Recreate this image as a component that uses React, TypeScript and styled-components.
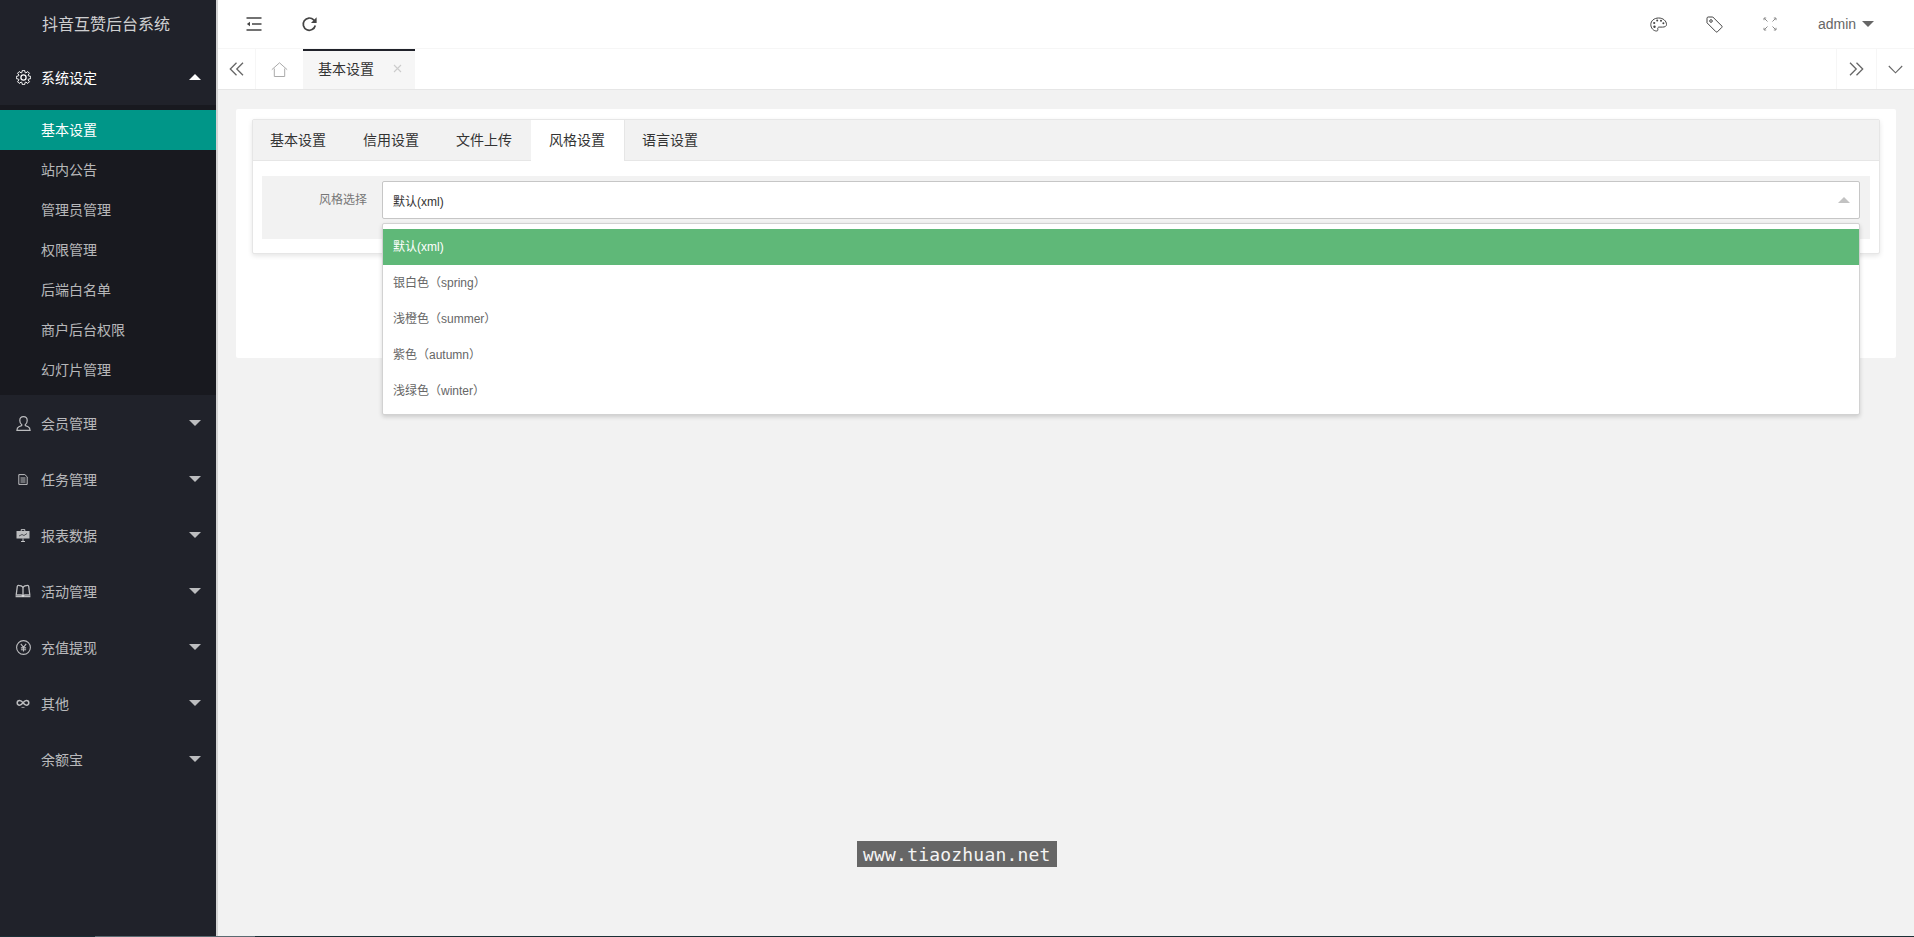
import React from "react";
import styled, { createGlobalStyle } from "styled-components";

const Global = createGlobalStyle`
  html, body { margin: 0; padding: 0; height: 100%; overflow: hidden; background: #f2f2f2; }
  body { font-family: "Liberation Sans", "Noto Sans CJK SC", sans-serif; font-size: 14px; color: #333; }
  * { box-sizing: border-box; }
`;

const Page = styled.div`
  position: relative;
  width: 1914px;
  height: 937px;
  display: flex;
  flex-direction: column;
  overflow: hidden;
`;
const Shell = styled.div`
  flex: 1;
  display: flex;
  min-height: 0;
`;
const BottomLine = styled.div`
  height: 1px;
  background: linear-gradient(90deg, #1b2f36 0 95px, #5b6b72 95px 255px, #1b2f36 255px);
`;

/* Sidebar */
const Sidebar = styled.aside`
  width: 218px;
  flex: none;
  background: #20222a;
  border-right: 2px solid #d4d4d4;
`;
const Logo = styled.div`
  height: 49px;
  padding: 0 0 3px 42px;
  display: flex;
  align-items: center;
  font-size: 16px;
  color: rgba(255, 255, 255, 0.8);
`;
const MenuHead = styled.div<{ $open?: boolean }>`
  height: 56px;
  padding-left: 16px;
  display: flex;
  align-items: center;
  color: ${(p) => (p.$open ? "#fff" : "rgba(255,255,255,.7)")};
`;
const MenuIcon = styled.span`
  width: 14px;
  height: 16px;
  margin-right: 11px;
  display: flex;
  align-items: center;
  justify-content: center;
  flex: none;
`;
const MenuLabel = styled.span`
  flex: 1;
`;
const Caret = styled.span<{ $up?: boolean; $color?: string }>`
  width: 0;
  height: 0;
  border-left: 6px solid transparent;
  border-right: 6px solid transparent;
  ${(p) =>
    p.$up
      ? `border-bottom: 6px solid ${p.$color || "#fff"};`
      : `border-top: 6px solid ${p.$color || "rgba(255,255,255,.7)"};`}
`;
const MenuCaretBox = styled.span`
  width: 27px;
  flex: none;
  display: flex;
`;
const SubMenu = styled.div`
  background: #18191f;
  padding: 5px 0;
`;
const SubItem = styled.div<{ $active?: boolean }>`
  height: 40px;
  line-height: 40px;
  padding-left: 41px;
  color: ${(p) => (p.$active ? "#fff" : "rgba(255,255,255,.7)")};
  background: ${(p) => (p.$active ? "#009688" : "transparent")};
`;

/* Main */
const Main = styled.main`
  flex: 1;
  min-width: 0;
  display: flex;
  flex-direction: column;
`;
const Header = styled.header`
  height: 49px;
  flex: none;
  background: #fff;
  border-bottom: 1px solid #f6f6f6;
  display: flex;
  align-items: center;
  padding: 0 0 0 8px;
`;
const HeadBtn = styled.div`
  width: 56px;
  height: 48px;
  display: flex;
  align-items: center;
  justify-content: center;
  color: #444;
`;
const HeadSpacer = styled.div`
  flex: 1;
`;
const UserBox = styled.div`
  width: 116px;
  height: 48px;
  padding: 0 0 0 20px;
  display: flex;
  align-items: center;
  gap: 6px;
  color: #666;
  font-size: 14px;
`;

const TabBar = styled.div`
  height: 41px;
  flex: none;
  background: #fff;
  border-bottom: 1px solid #e6e6e6;
  display: flex;
`;
const BarBtn = styled.div<{ $w: number; $side: "left" | "right" }>`
  width: ${(p) => p.$w}px;
  flex: none;
  display: flex;
  align-items: center;
  justify-content: center;
  color: #666;
  padding-right: ${(p) => (p.$side === "right" ? "1px" : "0")};
  ${(p) => (p.$side === "right" ? "border-right" : "border-left")}: 1px solid #f6f6f6;
`;
const HomeBtn = styled.div`
  width: 47px;
  flex: none;
  display: flex;
  align-items: center;
  justify-content: center;
  color: #aaa;
`;
const PageTab = styled.div`
  width: 112px;
  flex: none;
  background: #f6f6f6;
  border-top: 2px solid #20222a;
  padding: 0 0 4px 15px;
  display: flex;
  align-items: center;
  color: #333;
`;
const PageTabClose = styled.span`
  margin-left: 19px;
  width: 9px;
  display: flex;
  color: #ccc;
`;
const BarSpacer = styled.div`
  flex: 1;
`;

const Content = styled.div`
  flex: 1;
  padding: 19px 18px 0;
`;
const Card = styled.section`
  background: #fff;
  border-radius: 2px;
  height: 249px;
  padding: 10px 16px 0;
`;
const TabBox = styled.div`
  height: 135px;
  border: 1px solid #e6e6e6;
  border-radius: 2px;
  background: #fff;
  box-shadow: 0 2px 5px 0 rgba(0, 0, 0, 0.1);
`;
const TabTitle = styled.ul`
  list-style: none;
  margin: 0;
  padding: 0;
  height: 41px;
  display: flex;
  background: #f2f2f2;
  border-bottom: 1px solid #e6e6e6;
`;
const TabItem = styled.li<{ $active?: boolean }>`
  width: 93px;
  height: ${(p) => (p.$active ? "41px" : "40px")};
  line-height: 40px;
  padding-left: ${(p) => (p.$active ? "18px" : "17px")};
  margin: ${(p) => (p.$active ? "0 1px 0 -1px" : "0")};
  color: #333;
  background: ${(p) => (p.$active ? "#fff" : "transparent")};
  box-shadow: ${(p) => (p.$active ? "1px 0 0 #e6e6e6" : "none")};
`;
const TabBody = styled.div`
  padding: 15px 9px 0;
`;
const FormRow = styled.div`
  height: 63px;
  background: #f2f2f2;
  padding: 5px 10px 0 0;
  display: flex;
  align-items: flex-start;
  gap: 15px;
`;
const FormLabel = styled.label`
  width: 105px;
  flex: none;
  padding-top: 9px;
  line-height: 20px;
  font-size: 12px;
  text-align: right;
  color: #777;
`;
const SelectWrap = styled.div`
  position: relative;
  flex: 1;
`;
const SelectBox = styled.div`
  height: 38px;
  border: 1px solid #c6c6c6;
  border-radius: 2px;
  background: #fff;
  padding: 0 9px 0 10px;
  display: flex;
  align-items: center;
  justify-content: space-between;
  font-size: 12px;
  color: #333;
`;
const Dropdown = styled.div`
  position: absolute;
  z-index: 5;
  left: 0;
  right: 0;
  top: 42px;
  border: 1px solid #d2d2d2;
  border-radius: 2px;
  background: #fff;
  padding: 5px 0;
  box-shadow: 0 2px 4px rgba(0, 0, 0, 0.16);
`;
const Option = styled.div<{ $selected?: boolean }>`
  height: 36px;
  line-height: ${(p) => (p.$selected ? "36px" : "37px")};
  padding: 0 10px;
  font-size: 12px;
  color: ${(p) => (p.$selected ? "#fff" : "#666")};
  background: ${(p) => (p.$selected ? "#5fb878" : "transparent")};
`;
const Watermark = styled.div`
  position: absolute;
  left: 857px;
  top: 841px;
  width: 200px;
  height: 26px;
  background: #666;
  color: #f4f4f4;
  font-family: "DejaVu Sans Mono", monospace;
  font-size: 18px;
  letter-spacing: 0.2px;
  line-height: 27px;
  padding-left: 6px;
  white-space: nowrap;
  overflow: hidden;
`;

/* Icons */
const Svg = styled.svg.attrs({ xmlns: "http://www.w3.org/2000/svg", fill: "none", stroke: "currentColor" })`
  display: block;
  flex: none;
`;

const gearPath = (() => {
  const pts: string[] = [];
  const teeth = 8;
  for (let i = 0; i < teeth; i++) {
    const a = (i / teeth) * Math.PI * 2;
    const w = Math.PI / teeth;
    [
      [5.2, a - w * 0.8],
      [7.3, a - w * 0.4],
      [7.3, a + w * 0.4],
      [5.2, a + w * 0.8],
    ].forEach(([r, t]) => {
      pts.push(`${(7.5 + r * Math.cos(t)).toFixed(2)} ${(7.5 + r * Math.sin(t)).toFixed(2)}`);
    });
  }
  return "M" + pts.join("L") + "z";
})();

const GearIcon = () => (
  <Svg width="15" height="15" viewBox="0 0 15 15" strokeWidth="1">
    <path d={gearPath} strokeLinejoin="round" />
    <circle cx="7.5" cy="7.5" r="2.6" strokeWidth="1.3" />
  </Svg>
);
const UserIcon = () => (
  <Svg width="15" height="15" viewBox="0 0 15 15" strokeWidth="1.2">
    <path d="M3.800 4.600C3.800 2.300 5.300.7 7.500.7s3.700 1.600 3.700 3.900c0 1.800-.8 3.300-1.900 4v.9l2.800 1.300c1.300.6 2 1.500 2 3.600H.9c0-2.100.7-3 2-3.600l2.800-1.300v-.9c-1.100-.7-1.900-2.200-1.900-4z" />
  </Svg>
);
const DocIcon = () => (
  <Svg width="10" height="11" viewBox="0 0 10 11" strokeWidth="1">
    <path d="M.8.6h6l2.400 2.200v7.600H.8z" />
    <path d="M2.500 4h5M2.500 6h5M2.500 8h5" />
  </Svg>
);
const BoardIcon = () => (
  <Svg width="14" height="14" viewBox="0 0 14 14" strokeWidth="1">
    <path d="M.5 3h13v7.500H.5z" fill="currentColor" stroke="none" />
    <path d="M5.200 3V1.600h3.600V3" />
    <path d="M7 10.500v3M5 13.500h4" />
    <path d="M3 8l3-1.500 2 1 3-2" stroke="#20222a" strokeWidth=".7" />
  </Svg>
);
const BookIcon = () => (
  <Svg width="16" height="14" viewBox="0 0 16 14" strokeWidth="1.3">
    <path d="M8 3.200C7 1.800 5.600 1.400 3.200 1.400 2.600 1.400 2.400 1.800 2.300 2.400L1.200 11h4.600c1 0 1.700.3 2.200 1 .5-.7 1.200-1 2.200-1h4.600l-1.100-8.600c-.1-.6-.3-1-.9-1-2.400 0-3.800.4-4.800 1.800z" />
    <path d="M8 3.200V12M.6 12.600h14.800" />
  </Svg>
);
const YenIcon = () => (
  <Svg width="15" height="15" viewBox="0 0 15 15" strokeWidth="1.1">
    <circle cx="7.500" cy="7.500" r="6.900" />
    <path d="M4.800 3.800l2.700 3.600 2.700-3.600M7.500 7.400v4.200M4.900 7.900h5.200M4.900 9.700h5.200" />
  </Svg>
);
const InfinityIcon = () => (
  <Svg width="14" height="10" viewBox="0 0 14 10" strokeWidth="1.500">
    <path d="M7 4.600C6 3.200 5 2.400 3.600 2.400a2.400 2.400 0 000 4.800C5 7.200 6 6.200 7 4.800c1-1.400 2-2.400 3.400-2.400a2.400 2.400 0 010 4.800C9 7.200 8 6.200 7 4.800z" />
    <path d="M5.500 9.400h3" strokeWidth=".8" />
  </Svg>
);
const ShrinkIcon = () => (
  <Svg width="16" height="14" viewBox="0 0 16 14" strokeWidth="1.500">
    <path d="M.5 1h15M6 7h9.500M.5 13h15" />
    <path d="M4 4.800v4.400L.9 7z" fill="currentColor" stroke="none" />
  </Svg>
);
const RefreshIcon = () => (
  <Svg width="17" height="17" viewBox="0 0 15 15" strokeWidth="1.500" style={{ marginRight: 2 }}>
    <path d="M12.600 8.400A5.400 5.400 0 1111.200 3.400L12.900 5" />
    <path d="M13.800 1.200v5h-5z" fill="currentColor" stroke="none" />
  </Svg>
);
const PaletteIcon = () => (
  <Svg width="17" height="15" viewBox="0 0 17 15" strokeWidth="1">
    <path d="M8.600 1C4.200 1 .8 3.800.8 7.600c0 3.500 2.800 6.400 5.600 6.400 1.400 0 1.700-.9 1.400-1.900-.3-1.100.2-2 1.300-2h3.400c2.400 0 4-.9 4-2.600C16.500 4 13.200 1 8.600 1z" />
    <g fill="currentColor" stroke="none">
      <circle cx="4.200" cy="6" r="1.100" />
      <circle cx="7.200" cy="3.600" r="1" />
      <circle cx="11" cy="3.800" r="1" />
      <circle cx="13.400" cy="6.200" r="1" />
      <circle cx="4.500" cy="9.800" r="1.200" />
    </g>
  </Svg>
);
const TagIcon = () => (
  <Svg width="17" height="17" viewBox="0 0 17 17" strokeWidth="1">
    <path d="M1 2.200C1 1.500 1.500 1 2.200 1h4.600l9 9c.4.400.4 1 0 1.400l-4.400 4.400c-.4.400-1 .4-1.400 0l-9-9z" />
    <circle cx="5" cy="5" r="1.300" />
  </Svg>
);
const FullIcon = () => (
  <Svg width="14" height="14" viewBox="0 0 14 14" strokeWidth="1" color="#8c8c8c">
    <path d="M1 3.200V1h2.200M1.200 1.200l3.300 3.300M13 3.200V1h-2.200M12.800 1.200L9.500 4.500M1 10.800V13h2.200M1.200 12.800l3.300-3.300M13 10.800V13h-2.200M12.800 12.800L9.500 9.500" />
  </Svg>
);
const DoubleLeft = () => (
  <Svg width="15" height="14" viewBox="0 0 15 14" strokeWidth="1.300">
    <path d="M7.500.800L1.300 7l6.200 6.200M14 .800L7.800 7l6.200 6.200" />
  </Svg>
);
const DoubleRight = () => (
  <Svg width="15" height="14" viewBox="0 0 15 14" strokeWidth="1.300">
    <path d="M1 .800L7.200 7 1 13.200M7.500.800L13.700 7l-6.200 6.200" />
  </Svg>
);
const ChevronDown = () => (
  <Svg width="15" height="9" viewBox="0 0 15 9" strokeWidth="1.100">
    <path d="M.8 1l6.700 6.800L14.200 1" />
  </Svg>
);
const HomeIcon = () => (
  <Svg width="17" height="15" viewBox="0 0 17 15" strokeWidth="1">
    <path d="M.8 7.700L8.500.8l7.700 6.900" />
    <path d="M3.300 6.500v8h10.400v-8" />
  </Svg>
);
const CloseIcon = () => (
  <Svg width="9" height="9" viewBox="0 0 9 9" strokeWidth="1.100">
    <path d="M1 1l7 7M8 1L1 8" />
  </Svg>
);

const closedMenus: { label: string; icon: React.ReactNode }[] = [
  { label: "会员管理", icon: <UserIcon /> },
  { label: "任务管理", icon: <DocIcon /> },
  { label: "报表数据", icon: <BoardIcon /> },
  { label: "活动管理", icon: <BookIcon /> },
  { label: "充值提现", icon: <YenIcon /> },
  { label: "其他", icon: <InfinityIcon /> },
  { label: "余额宝", icon: null },
];
const subItems = ["基本设置", "站内公告", "管理员管理", "权限管理", "后端白名单", "商户后台权限", "幻灯片管理"];
const tabs = ["基本设置", "信用设置", "文件上传", "风格设置", "语言设置"];
const options = ["默认(xml)", "银白色（spring）", "浅橙色（summer）", "紫色（autumn）", "浅绿色（winter）"];

export default function App() {
  return (
    <Page>
      <Global />
      <Shell>
        <Sidebar>
          <Logo>抖音互赞后台系统</Logo>
          <MenuHead $open>
            <MenuIcon><GearIcon /></MenuIcon>
            <MenuLabel>系统设定</MenuLabel>
            <MenuCaretBox><Caret $up /></MenuCaretBox>
          </MenuHead>
          <SubMenu>
            {subItems.map((s, i) => (
              <SubItem key={s} $active={i === 0}>{s}</SubItem>
            ))}
          </SubMenu>
          {closedMenus.map((m) => (
            <MenuHead key={m.label}>
              <MenuIcon>{m.icon}</MenuIcon>
              <MenuLabel>{m.label}</MenuLabel>
              <MenuCaretBox><Caret /></MenuCaretBox>
            </MenuHead>
          ))}
        </Sidebar>
        <Main>
          <Header>
            <HeadBtn><ShrinkIcon /></HeadBtn>
            <HeadBtn><RefreshIcon /></HeadBtn>
            <HeadSpacer />
            <HeadBtn><PaletteIcon /></HeadBtn>
            <HeadBtn><TagIcon /></HeadBtn>
            <HeadBtn><FullIcon /></HeadBtn>
            <UserBox>admin<Caret $color="#666" /></UserBox>
          </Header>
          <TabBar>
            <BarBtn $w={38} $side="right"><DoubleLeft /></BarBtn>
            <HomeBtn><HomeIcon /></HomeBtn>
            <PageTab>基本设置<PageTabClose><CloseIcon /></PageTabClose></PageTab>
            <BarSpacer />
            <BarBtn $w={40} $side="left"><DoubleRight /></BarBtn>
            <BarBtn $w={38} $side="left"><ChevronDown /></BarBtn>
          </TabBar>
          <Content>
            <Card>
              <TabBox>
                <TabTitle>
                  {tabs.map((t, i) => (
                    <TabItem key={t} $active={i === 3}>{t}</TabItem>
                  ))}
                </TabTitle>
                <TabBody>
                  <FormRow>
                    <FormLabel>风格选择</FormLabel>
                    <SelectWrap>
                      <SelectBox>
                        默认(xml)
                        <Caret $up $color="#c2c2c2" />
                      </SelectBox>
                      <Dropdown>
                        {options.map((o, i) => (
                          <Option key={o} $selected={i === 0}>{o}</Option>
                        ))}
                      </Dropdown>
                    </SelectWrap>
                  </FormRow>
                </TabBody>
              </TabBox>
            </Card>
          </Content>
        </Main>
      </Shell>
      <BottomLine />
      <Watermark>www.tiaozhuan.net</Watermark>
    </Page>
  );
}
